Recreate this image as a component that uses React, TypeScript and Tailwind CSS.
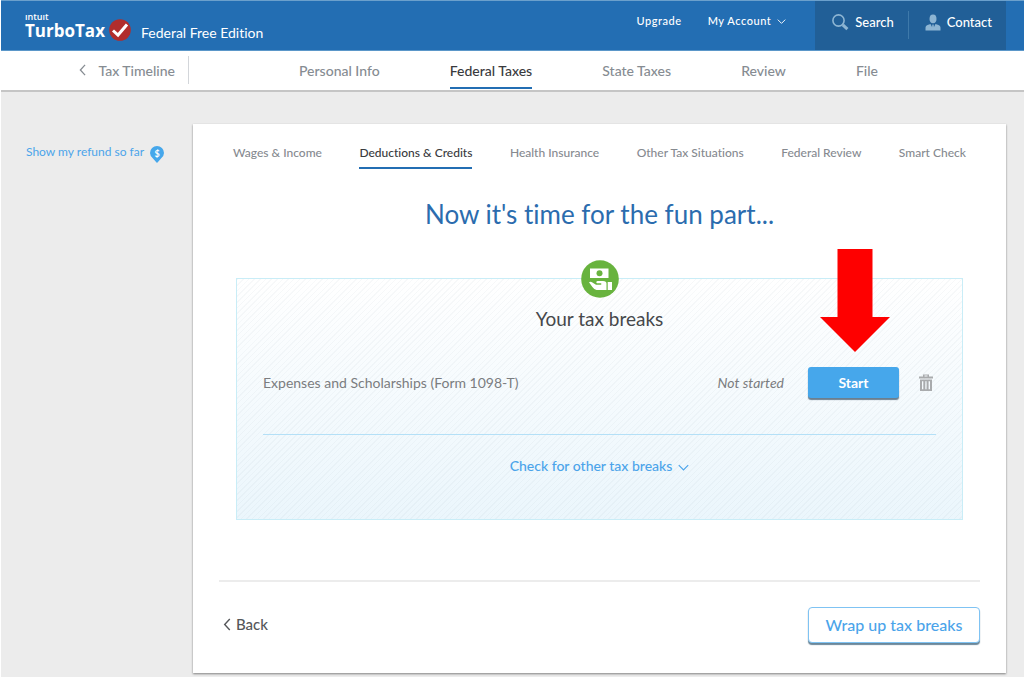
import React from "react";

const mainTabs = ["Personal Info", "Federal Taxes", "State Taxes", "Review", "File"];
const subTabs = [
  "Wages & Income",
  "Deductions & Credits",
  "Health Insurance",
  "Other Tax Situations",
  "Federal Review",
  "Smart Check",
];

function Chevron({ dir, className }: { dir: "left" | "down"; className: string }) {
  return (
    <svg
      viewBox={dir === "left" ? "0 0 8 14" : "0 0 14 8"}
      className={className}
      fill="none"
      stroke="currentColor"
      strokeWidth="1.5"
      aria-hidden="true"
    >
      <path d={dir === "left" ? "M7 1 1.5 7 7 13" : "M1 1l6 6 6-6"} />
    </svg>
  );
}

function Header() {
  return (
    <header className="flex h-[51px] border-t border-[#6ba0cc] border-b border-b-[#5b97c9] bg-[#236eb3] text-white">
      <a href="#home" className="ml-6 flex items-start">
        <span className="flex flex-col pt-[9px] font-['Open_Sans',sans-serif]">
          <span className="text-[9px] leading-[13px] font-semibold">ıntuıt</span>
          <span className="-mt-px text-[17px] leading-[18px] font-bold">TurboTax</span>
        </span>
        <svg viewBox="0 0 22 22" className="mt-[18px] ml-1 size-[22px]" aria-hidden="true">
          <circle cx="11" cy="11" r="10.8" fill="#b12d2c" />
          <path d="M4 11.5 9 16 18 5.5" fill="none" stroke="#fff" strokeWidth="3" />
        </svg>
        <span className="mt-[22px] ml-[10px] text-[14px] leading-5">Federal Free Edition</span>
      </a>
      <div className="ml-auto flex items-start gap-[26px] pt-3 pr-[29px] text-[11px] leading-4 font-medium tracking-wider">
        <a href="#upgrade">Upgrade</a>
        <button type="button" className="flex items-center gap-[6px]">
          My Account
          <Chevron dir="down" className="h-[5px] w-[9px]" />
        </button>
      </div>
      <div className="mr-[18px] flex bg-[#215f97] text-[13px] leading-5 font-medium">
        <button type="button" className="flex h-[42px] items-center gap-[6px] pr-[14px] pl-4">
          <svg viewBox="0 0 18 18" className="size-[18px] text-[#8db5d3]" fill="none" stroke="currentColor" aria-hidden="true">
            <circle cx="7.5" cy="7.5" r="5.6" strokeWidth="1.6" />
            <path d="m11.8 11.8 4.6 4.4" strokeWidth="3" />
          </svg>
          Search
        </button>
        <span className="mt-[10px] h-7 w-px bg-[#3e79aa]" />
        <button type="button" className="flex h-[42px] items-center gap-[6px] pr-[14px] pl-4">
          <svg viewBox="0 0 16 17" className="h-[17px] w-4 text-[#8db5d3]" fill="currentColor" aria-hidden="true">
            <ellipse cx="8" cy="4.800" rx="3.500" ry="4.400" />
            <path d="M.5 16.500v-3q0-2 2-2.500l3-1L8 15l2.500-5 3 1q2 .5 2 2.500v3z" />
            <path d="M7.400 10.500h1.200l.7 5H6.700z" />
          </svg>
          Contact
        </button>
      </div>
    </header>
  );
}

function MainNav() {
  return (
    <div className="flex h-[41px] border-b-2 border-[#c5c5c5] bg-white text-[14px] font-medium text-[#868c92]">
      <a href="#timeline" className="mt-[5px] flex h-7 w-[188px] items-center justify-end gap-3 border-r border-[#d3d6da] pr-[13px]">
        <Chevron dir="left" className="h-3 w-[7px]" />
        Tax Timeline
      </a>
      <nav className="mr-[146px] ml-[110px] flex flex-1 items-start justify-between leading-5">
        {mainTabs.map((t) => (
          <a
            key={t}
            href="#section"
            className={
              t === "Federal Taxes"
                ? "h-[38px] border-b-2 border-[#236eb3] pt-[10px] text-[#393a3d]"
                : "h-[38px] pt-[10px]"
            }
          >
            {t}
          </a>
        ))}
      </nav>
    </div>
  );
}

function TaxBreaks() {
  return (
    <section className="mx-[43px] mt-[46px] border border-[#c9edf7] bg-[repeating-linear-gradient(135deg,rgba(125,145,160,0.06)_0px,rgba(125,145,160,0.06)_1px,transparent_1px,transparent_4px),linear-gradient(to_bottom,#ffffff,#ebf6fc)] px-[26px]">
      <svg viewBox="0 0 38 38" className="mx-auto -mt-[19px] size-[38px]" aria-hidden="true">
        <circle cx="19" cy="19" r="18.800" fill="#68b33e" />
        <path d="M9 8.500h18.500V18H9z" fill="#fff" />
        <circle cx="18.500" cy="13.200" r="3" fill="#68b33e" />
        <path
          d="M8 22.300q1.500-1.300 3.400.2l3.600 2.200h5q1-.7 0-1.400h-4q-1.800-1.500.5-2.300h5.500q3.500.1 3.500 2.400V30H15.500q-2.200-.3-4.100-3z"
          fill="#fff"
        />
        <path d="M26.700 22h4.300v8h-4.300z" fill="#fff" />
      </svg>
      <h2 className="mt-[7px] text-center text-[19px] leading-7 text-[#46484b]">Your tax breaks</h2>
      <div className="mt-[33px] flex h-8 items-center text-[14px] text-[#7b7d80]">
        <span>Expenses and Scholarships (Form 1098-T)</span>
        <em className="mr-6 ml-auto">Not started</em>
        <button
          type="button"
          className="h-[31px] w-[91px] rounded-[3px] bg-[#46a7eb] text-[14px] font-bold text-white shadow-[0_2px_1px_#6b7f8f]"
        >
          Start
        </button>
        <button type="button" aria-label="Delete" className="mr-[3px] ml-5 text-[#a9abad]">
          <svg viewBox="0 0 14 17" className="h-[17px] w-[14px]" fill="currentColor" aria-hidden="true">
            <path d="M4 2.500V.5h6v2h4v2H0v-2zM5.500 1.500v1h3v-1z" fillRule="evenodd" />
            <path d="M1 5.500h12V17H1zM3 7.200v8h1.300v-8zm3.300 0v8h1.300v-8zm3.300 0v8H11v-8z" fillRule="evenodd" />
          </svg>
        </button>
      </div>
      <div className="mt-9 border-t border-[#b4e0f7] pt-[21px] pb-[43px]">
        <button type="button" className="mx-auto flex items-center gap-[6px] text-[14px] leading-5 font-medium text-[#4ba4ea]">
          Check for other tax breaks
          <Chevron dir="down" className="mt-[3px] h-[7px] w-[11px]" />
        </button>
      </div>
    </section>
  );
}

export default function App() {
  return (
    <div className="min-h-screen border-l border-white bg-[#ececec] pb-1 font-[Lato,sans-serif] [font-variant-ligatures:none]">
      <Header />
      <MainNav />
      <div className="flex items-start pt-8 pr-[18px]">
        <aside className="w-48 shrink-0 pt-5 pl-[25px]">
          <a href="#refund" className="flex items-start gap-[6px] text-[12px] leading-4 text-[#4ba4ea]">
            Show my refund so far
            <svg viewBox="0 0 14 17" className="mt-[2px] h-[17px] w-[14px]" aria-hidden="true">
              <path d="M7 17Q5.800 16 3 12.600 0 10 0 7a7 7 0 0 1 14 0q0 3-3 5.600Q8.200 16 7 17z" fill="#46a7eb" />
              <text x="7" y="10.500" textAnchor="middle" fontSize="9" fontWeight="700" fill="#fff">
                $
              </text>
            </svg>
          </a>
        </aside>
        <main className="flex-1 bg-white pb-[30px] shadow-[0_1px_2px_rgba(0,0,0,0.45)]">
          <nav className="mx-10 flex justify-between text-[12px] leading-4 font-medium text-[#868a90]">
            {subTabs.map((t) => (
              <a
                key={t}
                href="#topic"
                className={
                  t === "Deductions & Credits"
                    ? "h-[45px] border-b-2 border-[#236eb3] pt-[21px] text-[#393a3d]"
                    : "h-[45px] pt-[21px]"
                }
              >
                {t}
              </a>
            ))}
          </nav>
          <h1 className="mt-[27px] text-center text-[26px] leading-9 text-[#2b6cae]">Now it's time for the fun part...</h1>
          <TaxBreaks />
          <footer className="mx-[26px] mt-[60px] flex items-start justify-between border-t-2 border-[#ececec] pt-[25px]">
            <button type="button" className="mt-[7px] ml-1 flex items-center gap-[5px] text-[15px] leading-5 font-medium text-[#55575a]">
              <Chevron dir="left" className="h-[13px] w-[8px]" />
              Back
            </button>
            <button
              type="button"
              className="h-9 w-[172px] rounded-[4px] border border-[#7fc3f3] bg-white text-[16px] font-medium text-[#4ba4ea] shadow-[0_2px_1px_#6b8799]"
            >
              Wrap up tax breaks
            </button>
          </footer>
        </main>
      </div>
      <svg
        viewBox="0 0 70 103"
        className="pointer-events-none absolute top-[249px] right-[134px] h-[103px] w-[70px]"
        aria-hidden="true"
      >
        <path d="M17.500 0h35v68H70L35 103 0 68h17.500z" fill="#fe0000" />
      </svg>
    </div>
  );
}
